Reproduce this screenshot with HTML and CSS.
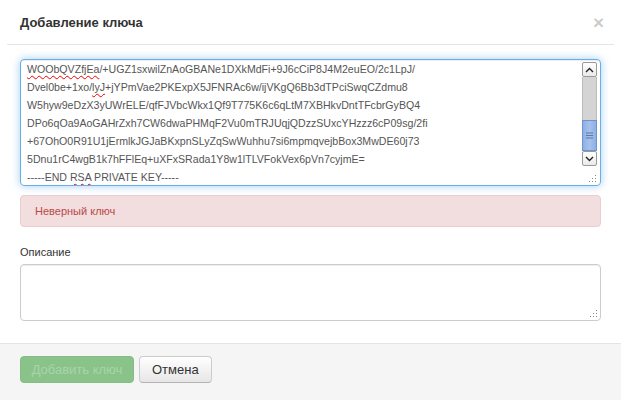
FILE: index.html
```html
<!DOCTYPE html>
<html lang="ru">
<head>
    <meta charset="UTF-8">
    <meta name="viewport" content="width=device-width, initial-scale=1.0">
    <title>Добавление ключа</title>
    <link rel="stylesheet" href="styles.css">
</head>
<body>

<div class="modal">
    <div class="modal-header">
        <h3>Добавление ключа</h3>
        <span class="close">&times;</span>
    </div>

    <div class="modal-body">
        <div class="key-box">
            <div class="key-text">
                <div><span class="spell">WOObQVZfjEa</span>/+UGZ1sxwilZnAoGBANe1DXkMdFi+9J6cCiP8J4M2euEO/2c1LpJ/</div>
                <div>Dvel0be+1xo/<span class="spell">lyJ</span>+jYPmVae2PKExpX5JFNRAc6w/ijVKgQ6Bb3dTPciSwqCZdmu8</div>
                <div>W5hyw9eDzX3yUWrELE/qfFJVbcWkx1Qf9T775K6c6qLtM7XBHkvDntTFcbrGyBQ4</div>
                <div>DPo6qOa9AoGAHrZxh7CW6dwaPHMqF2Vu0mTRJUqjQDzzSUxcYHzzz6cP09sg/2fi</div>
                <div>+67OhO0R91U1jErmlkJGJaBKxpnSLyZqSwWuhhu7si6mpmqvejbBox3MwDE60j73</div>
                <div>5Dnu1rC4wgB1k7hFFlEq+uXFxSRada1Y8w1lTLVFokVex6pVn7cyjmE=</div>
                <div>-----END <span class="spell">RSA</span> PRIVATE KEY-----</div>
            </div>
            <div class="scrollbar">
                <div class="sb-btn">
                    <svg width="9" height="6" viewBox="0 0 9 6"><path d="M1 5 L4.5 1.5 L8 5" fill="none" stroke="#222" stroke-width="1.4"/></svg>
                </div>
                <div class="sb-track">
                    <div class="sb-space"></div>
                    <div class="sb-thumb">
                        <svg width="7" height="7" viewBox="0 0 7 7"><path d="M0 1H7M0 3.5H7M0 6H7" stroke="#5a78a8" stroke-width="1"/></svg>
                    </div>
                </div>
                <div class="sb-btn">
                    <svg width="9" height="6" viewBox="0 0 9 6"><path d="M1 1 L4.5 4.5 L8 1" fill="none" stroke="#222" stroke-width="1.4"/></svg>
                </div>
                <div class="sb-corner">
                    <svg class="grip" width="9" height="9" viewBox="0 0 9 9" fill="#888">
                        <rect x="7" y="1" width="1" height="1"/>
                        <rect x="4" y="4" width="1" height="1"/><rect x="7" y="4" width="1" height="1"/>
                        <rect x="1" y="7" width="1" height="1"/><rect x="4" y="7" width="1" height="1"/><rect x="7" y="7" width="1" height="1"/>
                    </svg>
                </div>
            </div>
        </div>

        <div class="alert">Неверный ключ</div>

        <label class="field-label">Описание</label>
        <div class="desc-box">
            <svg class="grip" width="9" height="9" viewBox="0 0 9 9" fill="#888">
                <rect x="7" y="1" width="1" height="1"/>
                <rect x="4" y="4" width="1" height="1"/><rect x="7" y="4" width="1" height="1"/>
                <rect x="1" y="7" width="1" height="1"/><rect x="4" y="7" width="1" height="1"/><rect x="7" y="7" width="1" height="1"/>
            </svg>
        </div>
    </div>

    <div class="modal-footer">
        <button class="btn btn-success" disabled>Добавить ключ</button>
        <button class="btn">Отмена</button>
    </div>
</div>

</body>
</html>
```

FILE: styles.css
```css
body {
    margin: 0;
    font-family: "Liberation Sans", Arial, sans-serif;
    color: #333;
    background-color: #fff;
}

.modal {
    width: 621px;
    height: 400px;
    display: flex;
    flex-direction: column;
}

.modal-header {
    height: 44px;
    margin: 0 7px;
    padding: 0 13px;
    border-bottom: 1px solid #e5e5e5;
    display: flex;
    align-items: center;
    justify-content: space-between;
}

.modal-header h3 {
    margin: 0;
    font-size: 13px;
    font-weight: bold;
    color: #333;
}

.close {
    font-size: 19px;
    font-weight: bold;
    color: #000;
    opacity: 0.2;
    margin-right: -3px;
    line-height: 1;
}

.modal-body {
    flex: 1;
    padding: 14px 20px 0 20px;
}

.key-box {
    height: 125px;
    border: 1px solid #66afe9;
    border-radius: 4px;
    box-shadow: inset 0 1px 1px rgba(0, 0, 0, 0.075), 0 0 8px rgba(102, 175, 233, 0.6);
    display: flex;
    overflow: hidden;
}

.key-text {
    flex: 1;
    padding: 0 6px;
    font-size: 10.6px;
    line-height: 18px;
    color: #555;
    white-space: nowrap;
    overflow: hidden;
}

.spell {
    text-decoration: underline wavy #e00;
    text-decoration-thickness: 1px;
    text-underline-offset: 2px;
}

.scrollbar {
    width: 15px;
    padding: 2px 3px 0 0;
    display: flex;
    flex-direction: column;
}

.sb-btn {
    height: 13px;
    border: 1px solid #999;
    border-radius: 2px;
    background: linear-gradient(#fff, #eaeaea);
    display: flex;
    align-items: center;
    justify-content: center;
}

.sb-track {
    flex: 1;
    display: flex;
    flex-direction: column;
    background-color: #d4d4d4;
    border-left: 1px solid #bbb;
    border-right: 1px solid #bbb;
}

.sb-space {
    flex: 1;
}

.sb-thumb {
    height: 29px;
    margin: 0 -1px;
    background: linear-gradient(90deg, #8eb0e4, #a6c2ec, #8eb0e4);
    border: 1px solid #6e94cc;
    display: flex;
    align-items: center;
    justify-content: center;
}

.sb-corner {
    height: 17px;
    display: flex;
    align-items: flex-end;
    justify-content: flex-end;
    padding-bottom: 2px;
}

.alert {
    margin-top: 9px;
    height: 30px;
    padding: 0 14px;
    border: 1px solid #ebccd1;
    border-radius: 4px;
    background-color: #f2dede;
    color: #b94a48;
    font-size: 11px;
    display: flex;
    align-items: center;
}

.field-label {
    display: block;
    margin-top: 19px;
    font-size: 11px;
    color: #333;
}

.desc-box {
    margin-top: 6px;
    height: 53px;
    border: 1px solid #ccc;
    border-radius: 4px;
    box-shadow: inset 0 1px 1px rgba(0, 0, 0, 0.075);
    display: flex;
    align-items: flex-end;
    justify-content: flex-end;
    padding: 0 2px 2px 0;
}

.grip {
    display: block;
}

.modal-footer {
    height: 44px;
    padding: 12px 20px 0 20px;
    background-color: #f5f5f5;
    border-top: 1px solid #e5e5e5;
    display: flex;
    align-items: flex-start;
    gap: 5px;
}

.btn {
    height: 27px;
    padding: 0 12px;
    font-family: "Liberation Sans", Arial, sans-serif;
    font-size: 13px;
    color: #333;
    white-space: nowrap;
    background: linear-gradient(#fff, #e6e6e6);
    border: 1px solid #ccc;
    border-bottom-color: #b3b3b3;
    border-radius: 4px;
}

.btn-success {
    width: 114px;
    padding: 0;
    color: #a8d4a8;
    background: #8ac38a;
    border-color: #85bd85;
}
```
